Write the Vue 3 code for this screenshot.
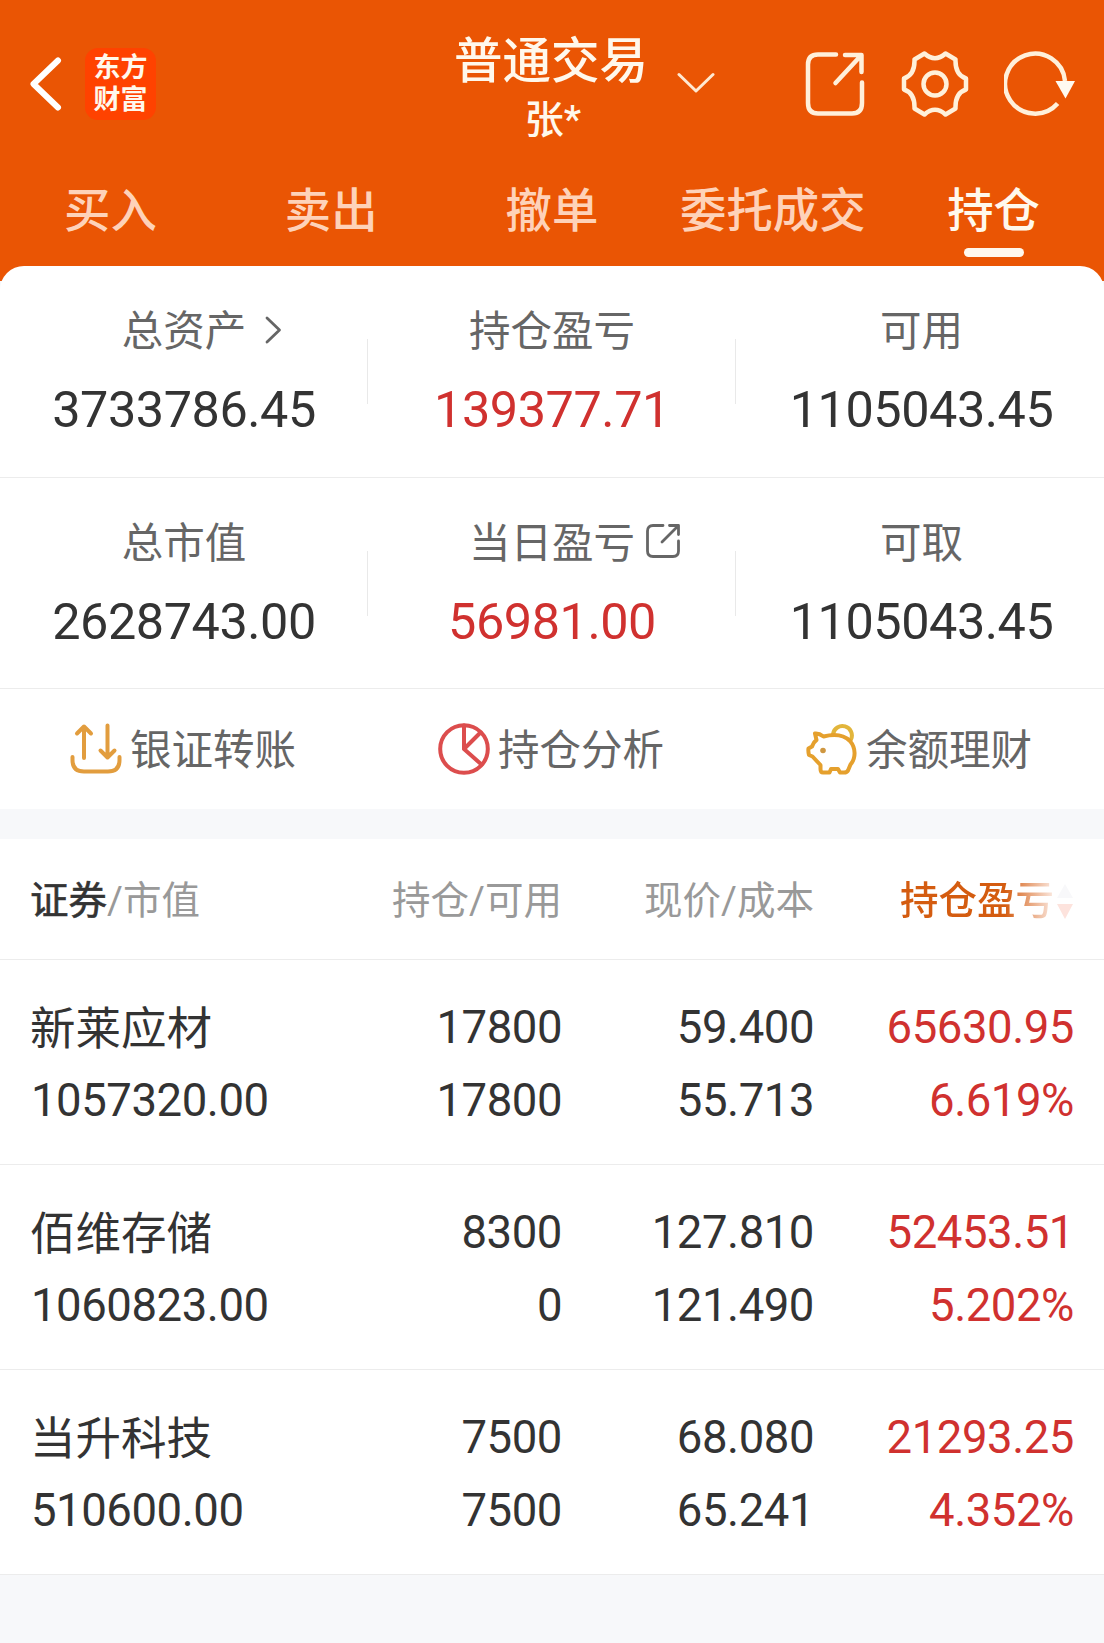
<template>
  <div class="trade-page">
    <header class="top">
      <div class="nav-bar">
        <div class="nav-left">
          <svg class="back-icon" width="34" height="56" viewBox="0 0 34 56">
            <path d="M30 4.500 L5.500 28 L30 51.500" />
          </svg>
          <div class="logo">
            <span>东方</span>
            <span>财富</span>
          </div>
        </div>

        <div class="account">
          <h1>{{ title }}</h1>
          <p>{{ userName }}</p>
        </div>

        <svg class="arrow-down" width="38" height="22" viewBox="0 0 38 22">
          <path d="M2 2.500 L19 19 L36 2.500" />
        </svg>

        <div class="nav-right">
          <svg width="60" height="66" viewBox="0 0 60 66">
            <path d="M31 3.500 H13 Q3 3.500 3 13.500 V52 Q3 62.500 13 62.500 H47 Q57 62.500 57 52 V31.500" />
            <path d="M40 4 H56.500 V21 M56 4.500 L30.500 32" />
          </svg>
          <svg width="70" height="66" viewBox="-35 -33 70 66">
            <path d="M-10.500 -30.500 Q0 -21 10.500 -30.500 L20.500 -24.500 Q20 -9 31 -5.500 V5.500 Q20 9 20.500 24.500 L10.500 30.500 Q0 21 -10.500 30.500 L-20.500 24.500 Q-20 9 -31 5.500 V-5.500 Q-20 -9 -20.500 -24.500 Z" />
            <circle cx="0" cy="0" r="11.500" />
          </svg>
          <svg class="refresh" width="72" height="66" viewBox="0 0 72 66">
            <path d="M53.600 52.500 A30 30 0 1 1 61 30" />
            <path class="solid" d="M51.500 30 H71 L61.500 47.500 Z" />
          </svg>
        </div>
      </div>

      <nav class="tabs">
        <div
          v-for="tab in tabs"
          :key="tab"
          class="tab"
          :class="{ active: tab === activeTab }"
          @click="activeTab = tab"
        >
          {{ tab }}
        </div>
      </nav>
    </header>

    <section class="summary">
      <div class="summary-row" v-for="(row, i) in summary" :key="i">
        <div class="summary-cell" v-for="item in row" :key="item.label">
          <div class="label">
            {{ item.label }}
            <svg v-if="item.icon === 'more'" class="label-icon more" width="18" height="30" viewBox="0 0 18 30">
              <path d="M3 3 L15.500 15 L3 27" />
            </svg>
            <svg v-if="item.icon === 'share'" class="label-icon share" width="36" height="36" viewBox="0 0 36 36">
              <path d="M18 2.500 H8 Q2.500 2.500 2.500 8 V28 Q2.500 33.500 8 33.500 H28 Q33.500 33.500 33.500 28 V18" />
              <path d="M24.500 2.500 H33.500 V11.500 M33 3 L17 19" />
            </svg>
          </div>
          <div class="amount" :class="{ red: item.red }">{{ item.value }}</div>
        </div>
      </div>

      <div class="actions">
        <div class="action">
          <svg class="transfer" width="52" height="52" viewBox="0 0 52 52">
            <path d="M14 35 V3.500 M7 10.500 L14 3.500 L21 10.500" />
            <path d="M37.500 2.500 V34 M30.500 27.500 L37.500 34.500 L44.500 27.500" />
            <path d="M2.500 34 V37 Q2.500 48.500 14 48.500 H38 Q49.500 48.500 49.500 37 V34" />
          </svg>
          <span>银证转账</span>
        </div>
        <div class="action">
          <svg class="pie" width="52" height="52" viewBox="0 0 52 52">
            <circle cx="26" cy="26" r="23.800" />
            <path d="M26 2.500 V26 L42.500 9.500 M26 26 L43.500 41.500" />
          </svg>
          <span>持仓分析</span>
        </div>
        <div class="action">
          <svg class="pig" width="52" height="52" viewBox="0 0 52 52">
            <path class="coin" d="M27 11 A9.500 9.500 0 1 1 45 16.500" />
            <path d="M9 10.500 Q13 10 17.500 13.500 C29 10.500 38 12 44 18 C50 25 50 35 44.500 41.500 L42 47.500 Q41 49.500 38 49.500 H34 L32 46 H25 L23.500 49.500 H17 Q14.500 49.500 14.500 46 V42 L6.500 33.500 L3 32 Q2 28 2.500 25.500 L6 23.500 Q7.500 19 10.500 17 Z" />
            <circle class="eye" cx="17" cy="27.500" r="2.800" />
          </svg>
          <span>余额理财</span>
        </div>
      </div>
    </section>

    <section class="holdings">
      <div class="grid-row list-head">
        <div><b>证券</b>/市值</div>
        <div>持仓/可用</div>
        <div>现价/成本</div>
        <div class="sort">
          <span>持仓盈亏</span>
          <svg width="18" height="38" viewBox="0 0 18 38">
            <path d="M9 2 L17 16 H1 Z" fill="#f8f8fa" />
            <path d="M1 22 H17 L9 37 Z" fill="#fde3dd" />
          </svg>
        </div>
      </div>

      <div class="grid-row stock" v-for="stock in stocks" :key="stock.name">
        <div>
          <p class="name">{{ stock.name }}</p>
          <p>{{ stock.marketValue }}</p>
        </div>
        <div>
          <p>{{ stock.position }}</p>
          <p>{{ stock.available }}</p>
        </div>
        <div>
          <p>{{ stock.price }}</p>
          <p>{{ stock.cost }}</p>
        </div>
        <div class="red">
          <p>{{ stock.profit }}</p>
          <p>{{ stock.rate }}</p>
        </div>
      </div>
    </section>
  </div>
</template>

<script setup>
import { ref } from 'vue'

const title = '普通交易'
const userName = '张*'

const tabs = ['买入', '卖出', '撤单', '委托成交', '持仓']
const activeTab = ref('持仓')

const summary = [
  [
    { label: '总资产', value: '3733786.45', icon: 'more' },
    { label: '持仓盈亏', value: '139377.71', red: true },
    { label: '可用', value: '1105043.45' }
  ],
  [
    { label: '总市值', value: '2628743.00' },
    { label: '当日盈亏', value: '56981.00', red: true, icon: 'share' },
    { label: '可取', value: '1105043.45' }
  ]
]

const stocks = [
  {
    name: '新莱应材',
    marketValue: '1057320.00',
    position: '17800',
    available: '17800',
    price: '59.400',
    cost: '55.713',
    profit: '65630.95',
    rate: '6.619%'
  },
  {
    name: '佰维存储',
    marketValue: '1060823.00',
    position: '8300',
    available: '0',
    price: '127.810',
    cost: '121.490',
    profit: '52453.51',
    rate: '5.202%'
  },
  {
    name: '当升科技',
    marketValue: '510600.00',
    position: '7500',
    available: '7500',
    price: '68.080',
    cost: '65.241',
    profit: '21293.25',
    rate: '4.352%'
  }
]
</script>

<style>
body {
  background: #f7f8fa;
}
</style>

<style scoped>
.trade-page {
  width: 1104px;
  min-height: 1643px;
  background: #f7f8fa;
  color: #333;
  font-family: Roboto, "Noto Sans CJK SC", sans-serif;
}

h1,
p {
  margin: 0;
}

svg {
  display: block;
  flex-shrink: 0;
  fill: none;
  stroke-linecap: round;
  stroke-linejoin: round;
}

.top {
  height: 281px;
  box-sizing: border-box;
  background: #ea5504;
  color: #fff8ec;
}

.nav-bar {
  display: grid;
  grid-template-columns: 452px 196px 1fr auto;
  height: 168px;
}

.nav-left {
  display: flex;
  align-items: center;
  gap: 23px;
  padding-left: 28px;
}

.back-icon {
  stroke: #fff;
  stroke-width: 6;
}

.logo {
  display: flex;
  flex-direction: column;
  width: 71px;
  height: 72px;
  padding-top: 4px;
  box-sizing: border-box;
  border-radius: 13px;
  background: #ff4200;
  font-size: 27px;
  font-weight: 700;
  line-height: 32px;
  text-align: center;
}

.account {
  padding-top: 32px;
  text-align: center;
  white-space: nowrap;
}

.account h1 {
  padding-left: 2px;
  font-size: 48.5px;
  font-weight: 500;
  line-height: 60px;
}

.account p {
  font-size: 39px;
  line-height: 56px;
  font-weight: 500;
  padding-left: 6px;
}

.arrow-down {
  margin: 72px 0 0 29px;
  stroke: #ffe9d2;
  stroke-width: 3;
}

.nav-right {
  display: flex;
  align-items: center;
  padding-right: 28px;
  stroke: #fff0da;
  stroke-width: 4.5;
}

.nav-right svg + svg {
  margin-left: 35px;
}

.nav-right svg.refresh {
  margin-left: 34px;
  stroke-linecap: butt;
}

.solid {
  fill: #fffaf0;
  stroke: none;
}

.tabs {
  display: grid;
  grid-template-columns: repeat(5, 1fr);
  padding-top: 12px;
}

.tab {
  position: relative;
  height: 78px;
  font-size: 46.4px;
  line-height: 62px;
  font-weight: 500;
  text-align: center;
  color: #fed2b9;
}

.tab.active {
  color: #fff8ec;
}

.tab.active::after {
  content: '';
  position: absolute;
  left: 50%;
  bottom: 1px;
  width: 60px;
  height: 9px;
  margin-left: -30px;
  border-radius: 5px;
  background: #fff8ee;
}

.summary {
  position: relative;
  margin-top: -15px;
  border-radius: 24px 24px 0 0;
  background: #fff;
}

.summary-row {
  display: grid;
  grid-template-columns: repeat(3, 1fr);
  height: 211.5px;
  box-sizing: border-box;
  padding-top: 36px;
  border-bottom: 1px solid #ececec;
}

.summary-cell {
  position: relative;
  text-align: center;
}

.summary-cell:last-child {
  padding-left: 3px;
}

.summary-cell + .summary-cell::before {
  content: '';
  position: absolute;
  left: -1px;
  top: 37px;
  width: 1px;
  height: 65px;
  background: #e9e9e9;
}

.label {
  position: relative;
  width: fit-content;
  margin: 0 auto;
  font-size: 41.5px;
  line-height: 60px;
  color: #666;
}

.label-icon {
  position: absolute;
  left: 100%;
  stroke: #666;
  stroke-width: 2.8;
}

.label-icon.more {
  top: 13px;
  margin-left: 18px;
}

.label-icon.share {
  top: 9px;
  margin-left: 10px;
}

.amount {
  margin-top: 18px;
  font-size: 50.4px;
  line-height: 60px;
  letter-spacing: -0.45px;
}

.red {
  color: #d0312f;
}

.actions {
  display: grid;
  grid-template-columns: repeat(3, 1fr);
  height: 120px;
}

.action {
  display: flex;
  align-items: center;
  justify-content: center;
  gap: 8px;
  padding-right: 2px;
  font-size: 41.5px;
  line-height: 60px;
  color: #666;
}

.action span {
  padding-top: 3px;
}

.action svg {
  stroke-width: 4;
}

.transfer {
  stroke: #e29d3e;
}

.pie {
  stroke: #dc4d4d;
}

.pig {
  stroke: #e5a02d;
}

.pig .coin {
  stroke: #e2b53b;
}

.pig .eye {
  fill: #cf9740;
  stroke: none;
}

.holdings {
  margin-top: 30px;
  background: #fff;
}

.grid-row {
  display: grid;
  grid-template-columns: 300px 232px 252px 260px;
  padding-left: 30px;
  box-sizing: border-box;
  border-bottom: 1px solid #ececec;
  text-align: right;
}

.grid-row > div:first-child {
  text-align: left;
}

.list-head {
  height: 121px;
  padding-top: 3px;
  align-items: center;
  font-size: 38.5px;
  line-height: 58px;
  color: #999;
}

.list-head b {
  font-weight: 400;
  color: #333;
  -webkit-text-stroke: 0.6px #333;
}

.sort {
  display: flex;
  align-items: center;
  justify-content: flex-end;
  gap: 2px;
}

.sort span {
  background: linear-gradient(90deg, #d45c10 0%, #d45c10 68%, #fbeae2 100%);
  background-clip: text;
  color: transparent;
  font-weight: 500;
}

.stock {
  height: 205px;
  padding-top: 31px;
  font-size: 45.5px;
  line-height: 73px;
  letter-spacing: -0.45px;
}

.stock > div:first-child {
  padding-left: 1px;
}

.stock .name {
  height: 71px;
  margin-left: -1px;
  padding-top: 2px;
  letter-spacing: 0;
}
</style>
